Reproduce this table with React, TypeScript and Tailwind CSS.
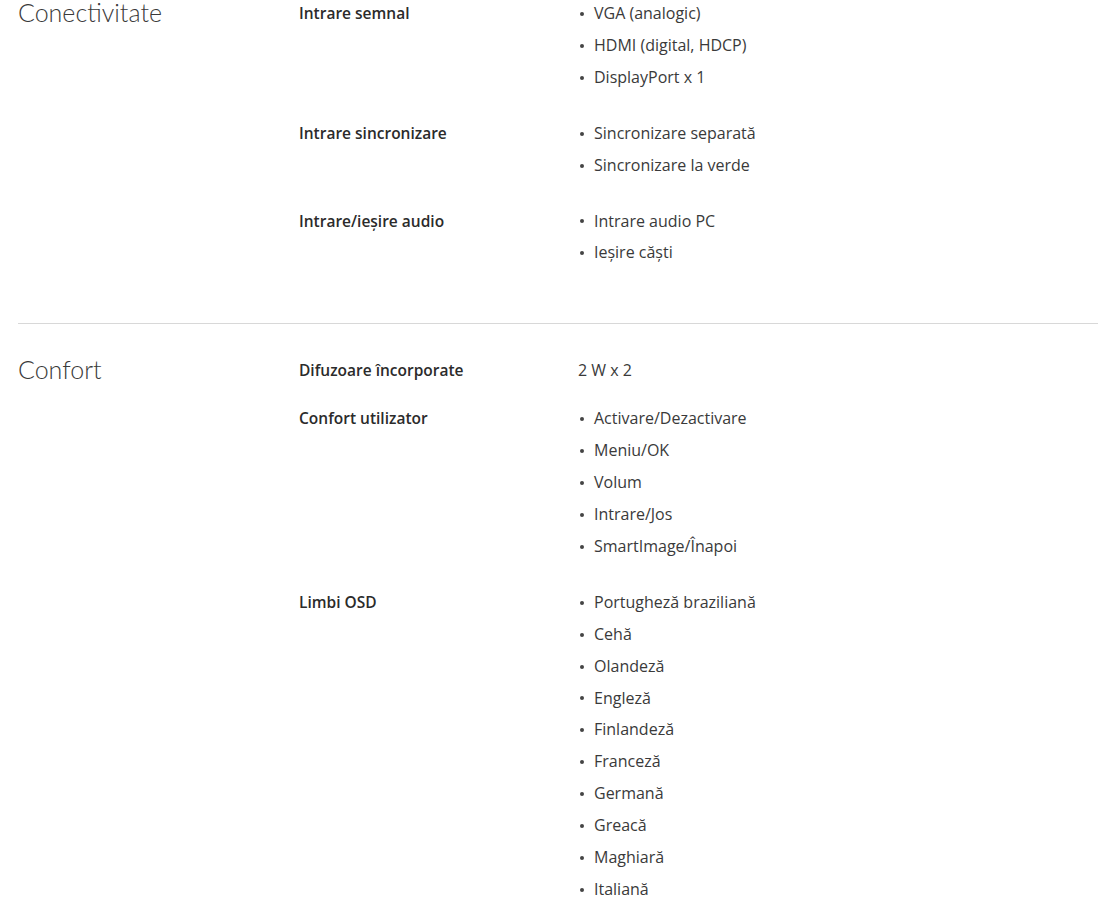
import React from "react";

type Spec = { label: string; values: string[]; single?: boolean };
type Section = { title: string; specs: Spec[] };

const sections: Section[] = [
  {
    title: "Conectivitate",
    specs: [
      { label: "Intrare semnal", values: ["VGA (analogic)", "HDMI (digital, HDCP)", "DisplayPort x 1"] },
      { label: "Intrare sincronizare", values: ["Sincronizare separată", "Sincronizare la verde"] },
      { label: "Intrare/ieșire audio", values: ["Intrare audio PC", "Ieșire căști"] },
    ],
  },
  {
    title: "Confort",
    specs: [
      { label: "Difuzoare încorporate", values: ["2 W x 2"], single: true },
      { label: "Confort utilizator", values: ["Activare/Dezactivare", "Meniu/OK", "Volum", "Intrare/Jos", "SmartImage/Înapoi"] },
      {
        label: "Limbi OSD",
        values: [
          "Portugheză braziliană",
          "Cehă",
          "Olandeză",
          "Engleză",
          "Finlandeză",
          "Franceză",
          "Germană",
          "Greacă",
          "Maghiară",
          "Italiană",
        ],
      },
    ],
  },
];

function SpecRow({ spec }: { spec: Spec }) {
  return (
    <div className={`flex ${spec.single ? "mb-4" : "mb-6"}`}>
      <div className="w-[279px] shrink-0 font-semibold text-[15.5px] leading-[31.9px] text-[#2b2b2b]">{spec.label}</div>
      {spec.single ? (
        <div className="text-[16px] leading-[31.9px] text-[#3a3a3a]">{spec.values[0]}</div>
      ) : (
        <ul className="text-[16px] leading-[31.9px] text-[#3a3a3a]">
          {spec.values.map((v) => (
            <li key={v} className="flex items-center">
              <span className="w-4 shrink-0 flex">
                <span className="ml-[2px] w-[4px] h-[4px] rounded-full bg-[#444]" />
              </span>
              <span>{v}</span>
            </li>
          ))}
        </ul>
      )}
    </div>
  );
}

export default function App() {
  return (
    <div className="bg-white w-[1102px] h-[902px] overflow-hidden font-['Open_Sans','Noto_Sans',sans-serif]">
      <div className="-mt-[2px] pl-[18px] pr-[4px]">
        {sections.map((s, i) => (
          <div key={s.title} className={i > 0 ? "border-t border-[#d8d8d8] pt-[31px]" : "pb-[30px]"}>
            <div className="flex items-start">
              <h2 className="w-[281px] shrink-0 mt-[2px] font-['Lato',sans-serif] text-[25px] font-light leading-[25px] text-[#3a3a3a]">
                {s.title}
              </h2>
              <div className="flex-1">
                {s.specs.map((sp) => (
                  <SpecRow key={sp.label} spec={sp} />
                ))}
              </div>
            </div>
          </div>
        ))}
      </div>
    </div>
  );
}
